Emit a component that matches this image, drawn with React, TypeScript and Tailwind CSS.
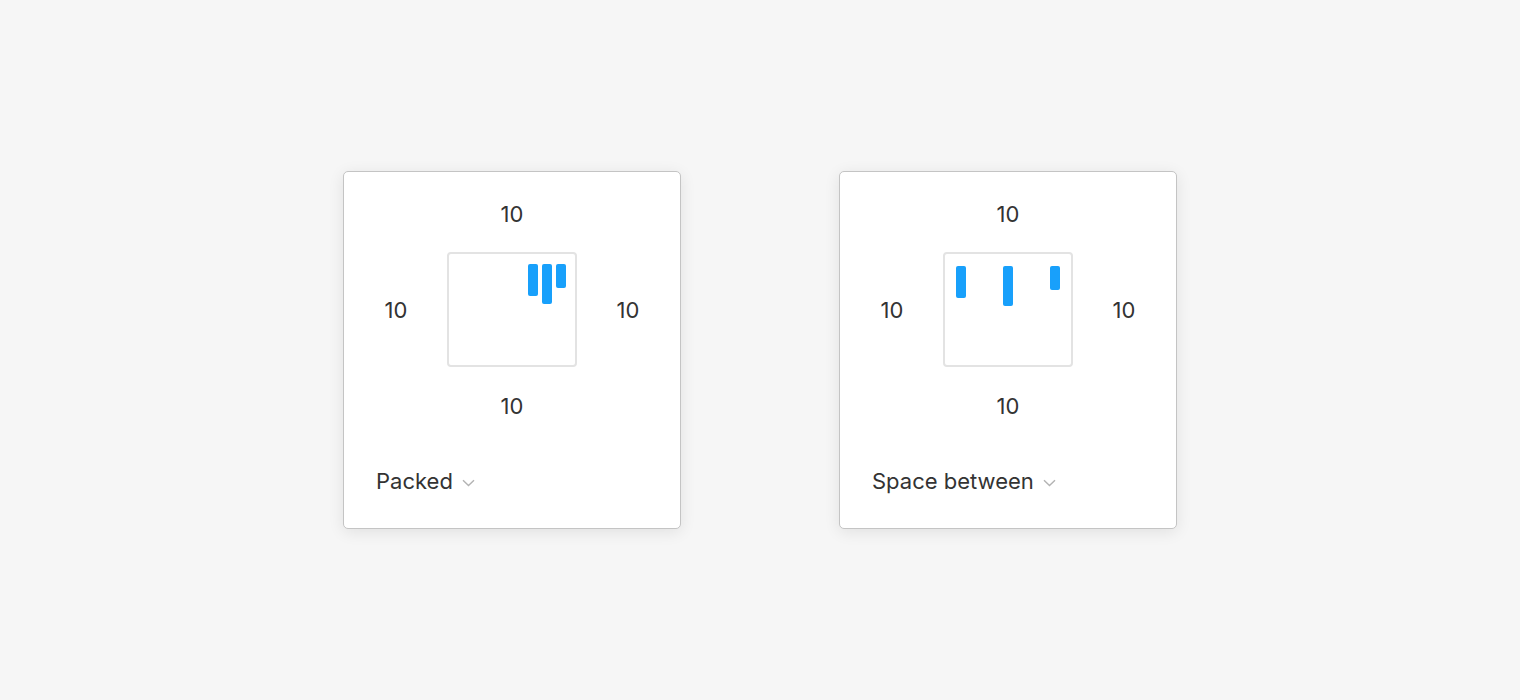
import React from 'react'

type Mode = 'packed' | 'between'

function Bars({ mode }: { mode: Mode }) {
  const box =
    mode === 'packed'
      ? 'justify-end gap-1 pt-[10px] pr-[9px]'
      : 'justify-between pt-[12px] px-[11px]'
  return (
    <div className={`flex items-start w-[130px] h-[115px] border-2 border-[#e3e3e3] rounded-[4px] bg-white ${box}`}>
      <div className="w-[10px] h-[32px] rounded-[2px] bg-[#18a0fb]" />
      <div className="w-[10px] h-[40px] rounded-[2px] bg-[#18a0fb]" />
      <div className="w-[10px] h-[24px] rounded-[2px] bg-[#18a0fb]" />
    </div>
  )
}

function Card({ mode, label }: { mode: Mode; label: string }) {
  return (
    <div className="flex flex-col w-[338px] h-[358px] bg-white border border-[#c4c4c4] rounded-[5px] shadow-[0_3px_16px_rgba(0,0,0,0.09)] pt-[28px] text-[#333] text-[22px]">
      <div className="h-7 leading-7 text-center">10</div>
      <div className="mt-6 flex items-center justify-center gap-[27px]">
        <div className="w-12 text-center leading-7">10</div>
        <Bars mode={mode} />
        <div className="w-12 text-center leading-7">10</div>
      </div>
      <div className="mt-[25px] h-7 leading-7 text-center">10</div>
      <div className="mt-[47px] pl-8 h-7 flex items-center gap-[9px]">
        <span className="leading-7">{label}</span>
        <svg width="13" height="8" viewBox="0 0 13 8" fill="none" className="mt-[3px]">
          <path d="M1 1.2 L6.5 6.5 L12 1.2" stroke="#b3b3b3" strokeWidth="1.4" />
        </svg>
      </div>
    </div>
  )
}

export default function App() {
  return (
    <div className="w-full h-[700px] bg-[#f6f6f6] flex items-center justify-center gap-[158px] font-['Inter',sans-serif]">
      <Card mode="packed" label="Packed" />
      <Card mode="between" label="Space between" />
    </div>
  )
}
